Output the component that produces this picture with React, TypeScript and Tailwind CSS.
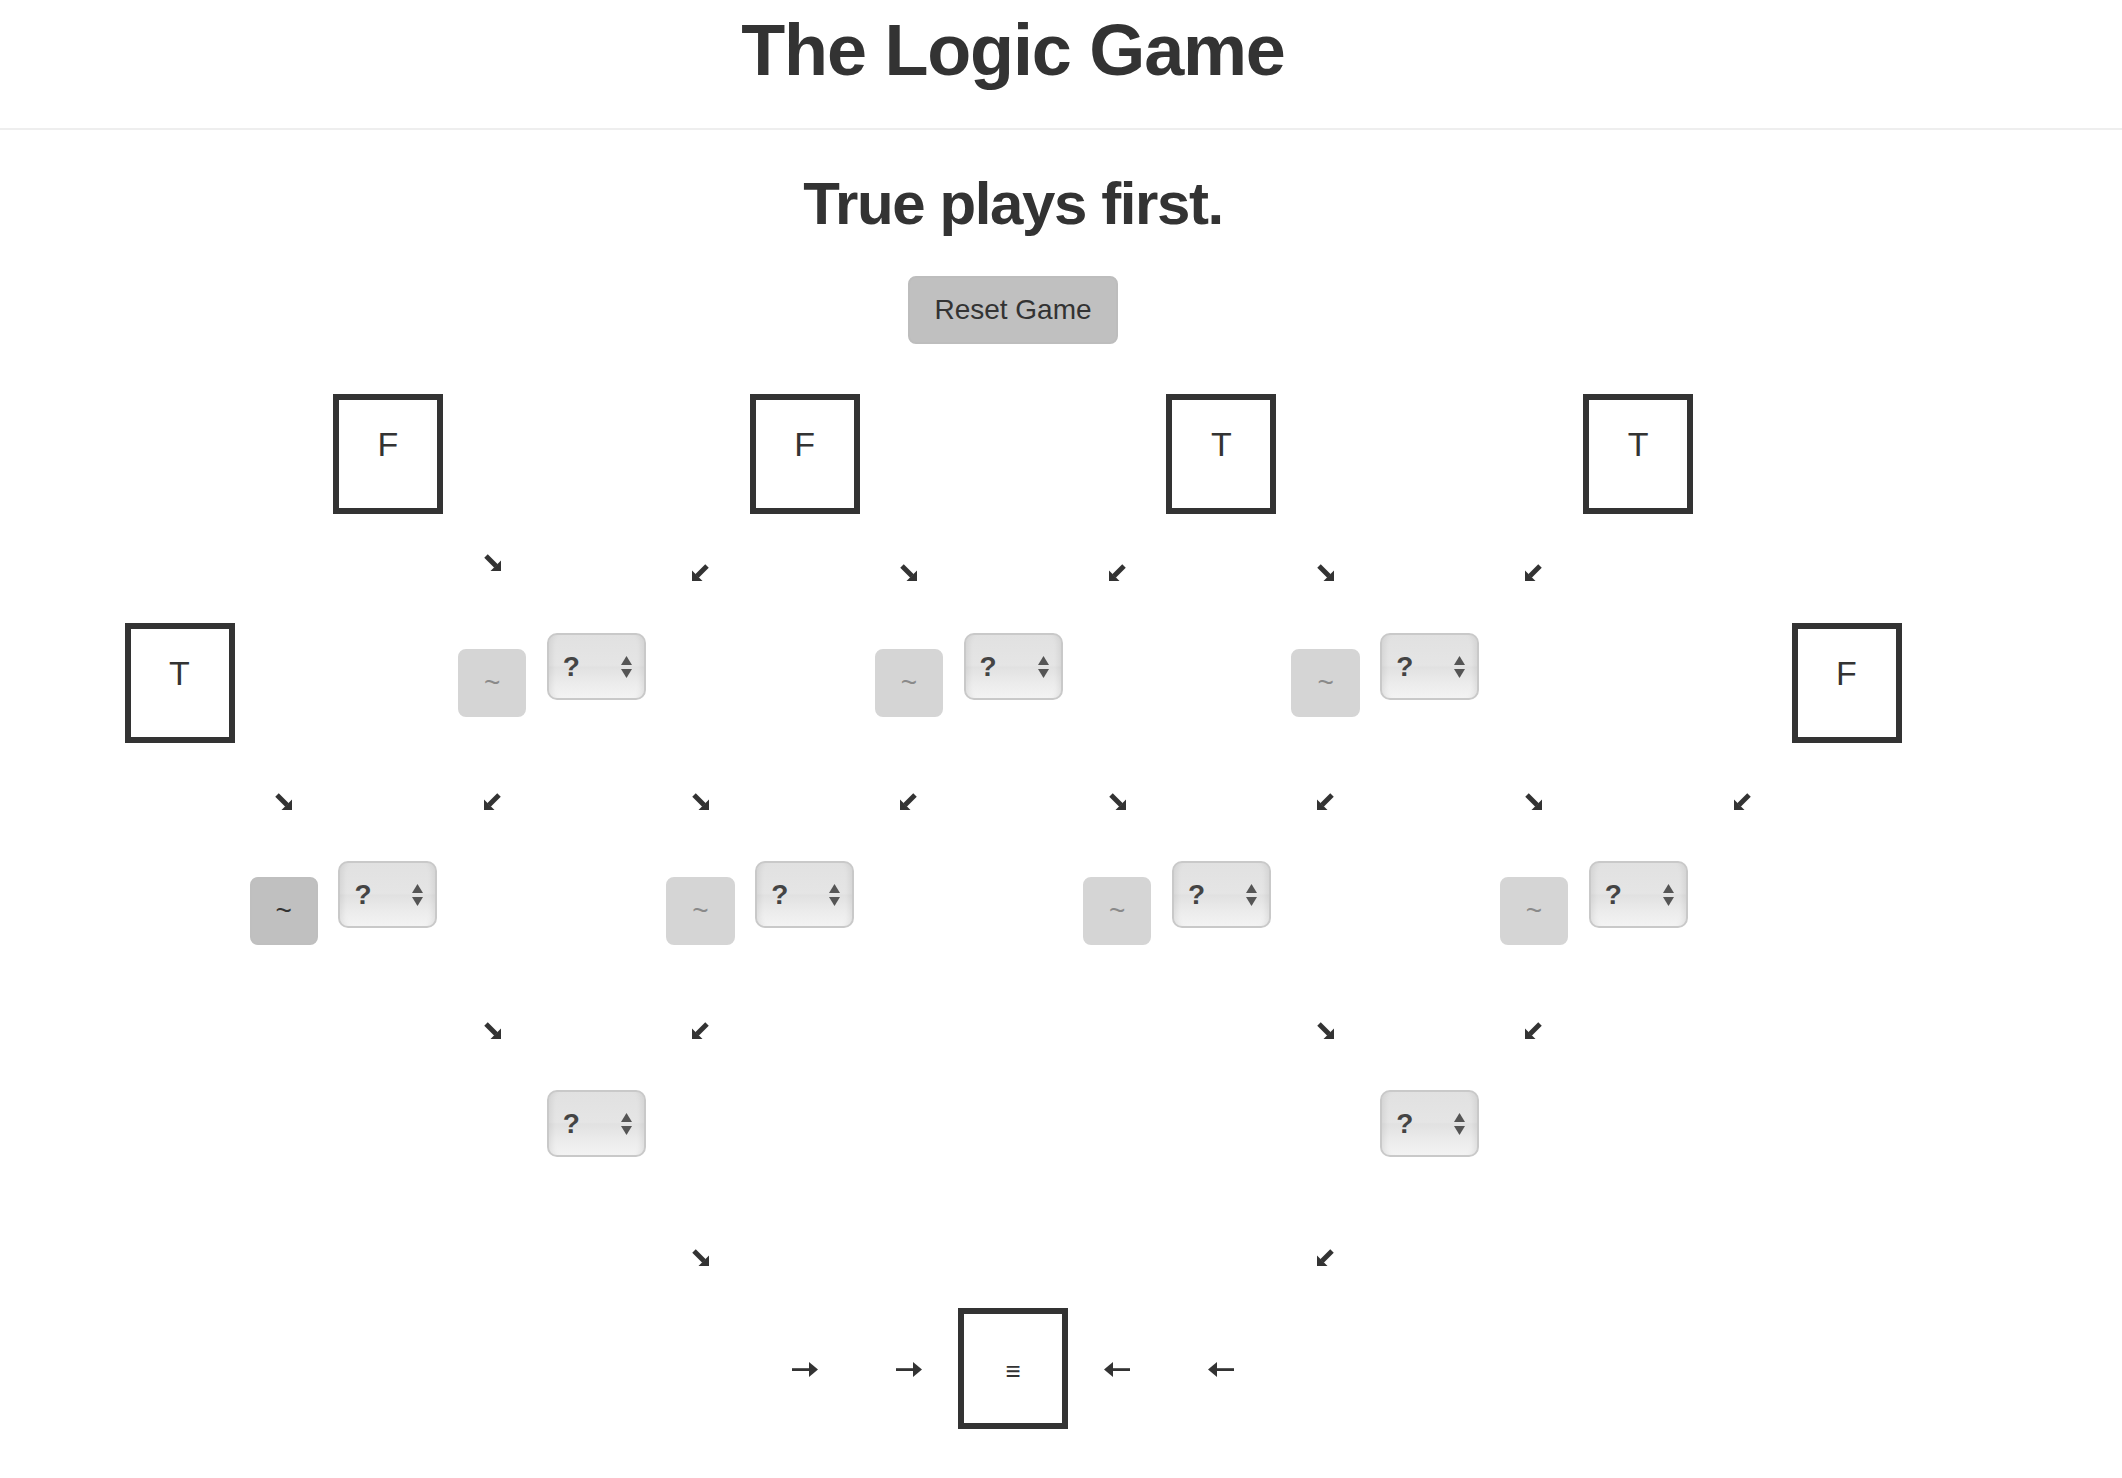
import type { ReactNode } from 'react';

// grid geometry: 17 columns, each item centred in its column
const COLS = 17;

function Leaf({ v }: { v: string }) {
  return (
    <div className="shrink-0 w-[110px] h-[120px] border-[6px] border-[#333] pt-[27px] text-center text-[34px] leading-[34px] text-[#333]">
      {v}
    </div>
  );
}

function Result() {
  return (
    <div className="shrink-0 w-[110px] h-[121px] border-[6px] border-[#333] flex items-center justify-center pt-[4px] text-[26px] leading-none text-[#333]">
      ≡
    </div>
  );
}

function Not({ active = false, className = '' }: { active?: boolean; className?: string }) {
  return (
    <button
      className={
        active
          ? `shrink-0 rounded-[8px] border-2 border-[#bfbfbf] bg-[#c0c0c0] px-[24px] py-[12px] text-[28px] leading-[40px] text-[#333] ${className}`
          : `shrink-0 rounded-[8px] border-2 border-[#d5d5d5] bg-[#d5d5d5] px-[24px] py-[12px] text-[28px] leading-[40px] text-[#8a8a8a] ${className}`
      }
    >
      ~
    </button>
  );
}

function Select({ className = '' }: { className?: string }) {
  return (
    <div
      className={`shrink-0 w-[99px] h-[67px] rounded-[10px] border-2 border-[#c9c9c9] bg-[linear-gradient(to_bottom,#e1e1e1_0%,#e5e5e5_48%,#e1e1e1_51%,#ebebeb_75%,#f3f3f3_100%)] shadow-[inset_8px_0_6px_-6px_rgba(0,0,0,0.08),inset_-8px_0_6px_-6px_rgba(0,0,0,0.08)] flex items-center justify-between pl-[14px] pr-[12px] ${className}`}
    >
      <span className="text-[28px] leading-none font-bold text-[#444]">?</span>
      <svg width="11" height="22" viewBox="0 0 11 22">
        <polygon points="5.5,0 11,9 0,9" fill="#555" />
        <polygon points="0,13 11,13 5.5,22" fill="#555" />
      </svg>
    </div>
  );
}

function Diag({ dir, className = '' }: { dir: 'se' | 'sw'; className?: string }) {
  return (
    <svg
      width="17"
      height="17"
      viewBox="0 0 17 17"
      className={`shrink-0 ${dir === 'sw' ? '-scale-x-100' : ''} ${className}`}
    >
      <line x1="2" y1="2" x2="12" y2="12" stroke="#333" strokeWidth="5" strokeLinecap="butt" />
      <polygon points="17,17 6.5,17 17,6.5" fill="#333" />
    </svg>
  );
}

function Horiz({ dir }: { dir: 'e' | 'w' }) {
  return (
    <svg width="26" height="15" viewBox="0 0 26 15" className={`shrink-0 mt-[54px] ${dir === 'w' ? '-scale-x-100' : ''}`}>
      <rect x="0" y="6.2" width="19" height="2.8" fill="#333" />
      <polygon points="17,0 26,7.5 17,15" fill="#333" />
    </svg>
  );
}

function Row({ h, items }: { h: string; items: Record<number, ReactNode> }) {
  return (
    <div className={`grid grid-cols-[repeat(17,104.2px)] ${h}`}>
      {Array.from({ length: COLS }, (_, i) => (
        <div key={i} className="flex justify-center items-start">
          {items[i] ?? null}
        </div>
      ))}
    </div>
  );
}

export default function App() {
  return (
    <div className="min-h-screen bg-white font-['Liberation_Sans',Arial,sans-serif] text-[#333]">
      {/* Header */}
      <div className="border-b-2 border-[#eee] pt-[11px] pb-[38px]">
        <div className="w-[2026px]">
          <h1 className="text-center text-[72px] leading-[79px] font-bold tracking-[-1.2px]">The Logic Game</h1>
        </div>
      </div>

      <div className="w-[2026px] flex flex-col items-center">
        <h2 className="mt-[41px] text-[60px] leading-[66px] font-bold tracking-[-1.4px]">True plays first.</h2>

        <button className="mt-[39px] rounded-[8px] border-2 border-[#bdbdbd] bg-[#c0c0c0] px-[24px] py-[12px] text-[28px] leading-[40px] text-[#333]">
          Reset Game
        </button>

        {/* Game tree */}
        <div className="mt-[50px] flex flex-col">
          <Row
            h="h-[120px]"
            items={{ 2: <Leaf v="F" />, 6: <Leaf v="F" />, 10: <Leaf v="T" />, 14: <Leaf v="T" /> }}
          />
          <Row
            h="h-[109px]"
            items={{
              3: <Diag dir="se" className="mt-[40px]" />,
              5: <Diag dir="sw" className="mt-[50px]" />,
              7: <Diag dir="se" className="mt-[50px]" />,
              9: <Diag dir="sw" className="mt-[50px]" />,
              11: <Diag dir="se" className="mt-[50px]" />,
              13: <Diag dir="sw" className="mt-[50px]" />,
            }}
          />
          <Row
            h="h-[121px]"
            items={{
              0: <Leaf v="T" />,
              3: <Not className="mt-[26px]" />,
              4: <Select className="mt-[10px]" />,
              7: <Not className="mt-[26px]" />,
              8: <Select className="mt-[10px]" />,
              11: <Not className="mt-[26px]" />,
              12: <Select className="mt-[10px]" />,
              16: <Leaf v="F" />,
            }}
          />
          <Row
            h="h-[117px]"
            items={{
              1: <Diag dir="se" className="mt-[49px]" />,
              3: <Diag dir="sw" className="mt-[49px]" />,
              5: <Diag dir="se" className="mt-[49px]" />,
              7: <Diag dir="sw" className="mt-[49px]" />,
              9: <Diag dir="se" className="mt-[49px]" />,
              11: <Diag dir="sw" className="mt-[49px]" />,
              13: <Diag dir="se" className="mt-[49px]" />,
              15: <Diag dir="sw" className="mt-[49px]" />,
            }}
          />
          <Row
            h="h-[111px]"
            items={{
              1: <Not active className="mt-[16px]" />,
              2: <Select />,
              5: <Not className="mt-[16px]" />,
              6: <Select />,
              9: <Not className="mt-[16px]" />,
              10: <Select />,
              13: <Not className="mt-[16px]" />,
              14: <Select />,
            }}
          />
          <Row
            h="h-[118px]"
            items={{
              3: <Diag dir="se" className="mt-[50px]" />,
              5: <Diag dir="sw" className="mt-[50px]" />,
              11: <Diag dir="se" className="mt-[50px]" />,
              13: <Diag dir="sw" className="mt-[50px]" />,
            }}
          />
          <Row h="h-[110px]" items={{ 4: <Select />, 12: <Select /> }} />
          <Row
            h="h-[108px]"
            items={{
              5: <Diag dir="se" className="mt-[49px]" />,
              11: <Diag dir="sw" className="mt-[49px]" />,
            }}
          />
          <Row
            h="h-[121px]"
            items={{
              6: <Horiz dir="e" />,
              7: <Horiz dir="e" />,
              8: <Result />,
              9: <Horiz dir="w" />,
              10: <Horiz dir="w" />,
            }}
          />
        </div>
      </div>
    </div>
  );
}
